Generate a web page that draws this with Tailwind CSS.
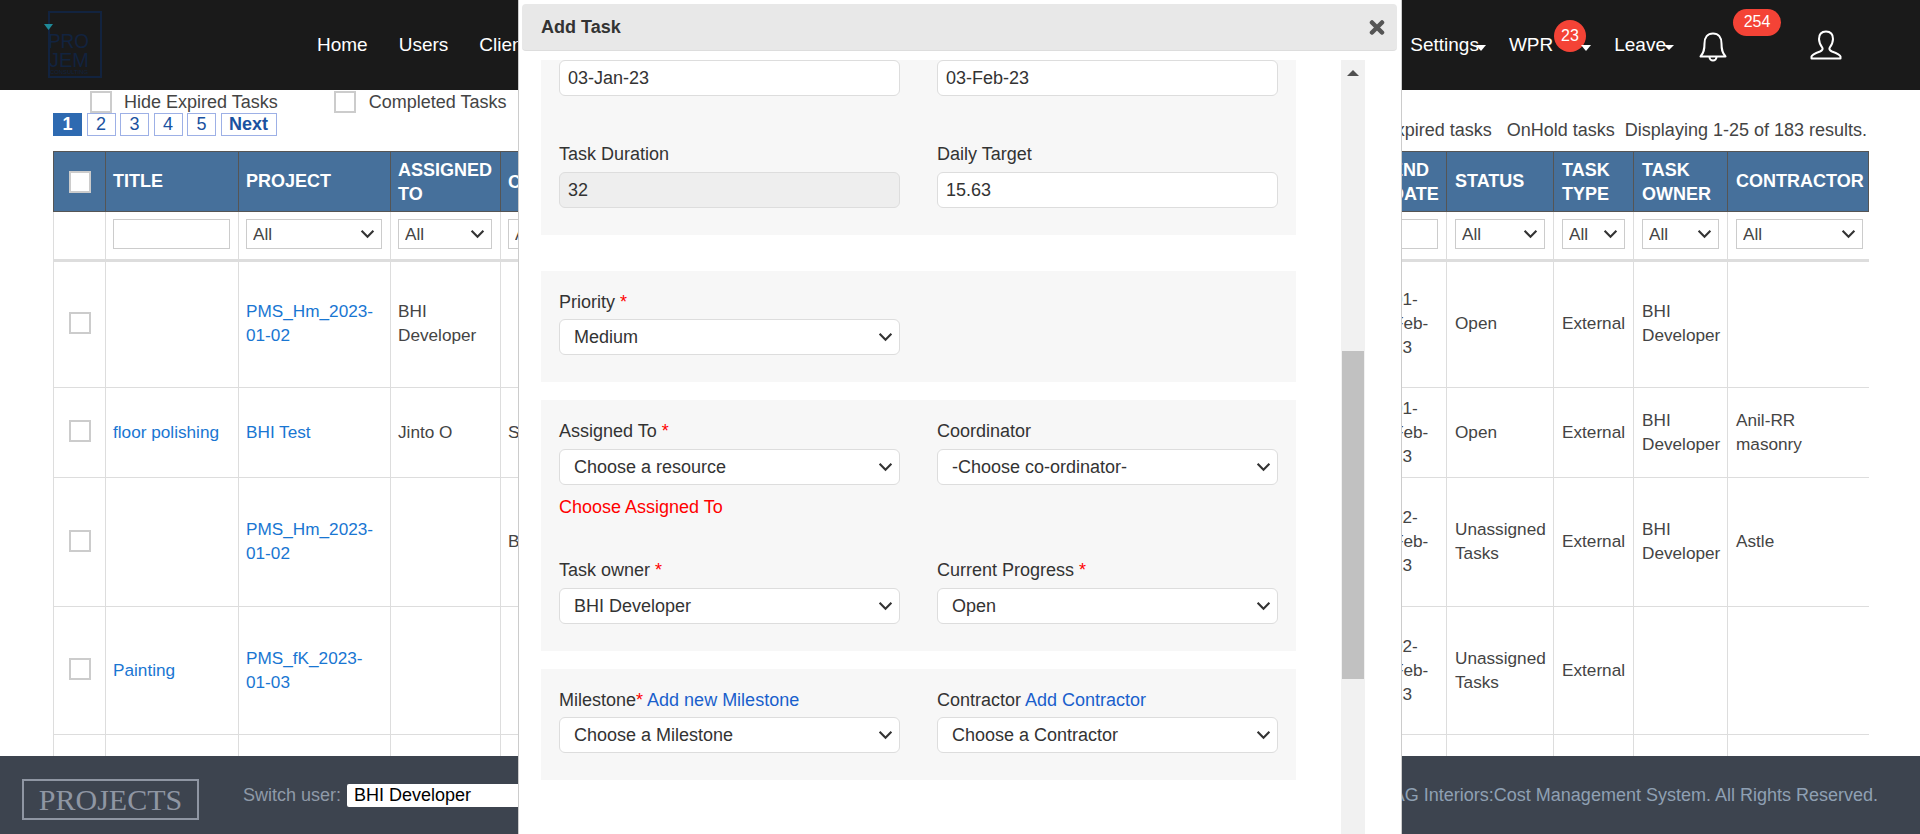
<!DOCTYPE html>
<html lang="en">
<head>
    <meta charset="UTF-8">
    <meta name="viewport" content="width=device-width, initial-scale=1.0">
    <title>Tasks</title>
    <script src="https://cdn.jsdelivr.net/npm/@tailwindcss/browser@4"></script>
</head>
<body class="relative h-[834px] overflow-hidden bg-white font-['Liberation_Sans',Arial,sans-serif] text-[18px] leading-6 text-[#444] [&_select]:appearance-none [&_select]:bg-no-repeat [&_select]:bg-position-[right_6px_center] [&_select]:bg-size-[15px_10px] [&_select]:bg-[url('data:image/svg+xml,%3Csvg%20xmlns=%22http://www.w3.org/2000/svg%22%20viewBox=%220%200%2014%209%22%3E%3Cpath%20d=%22M1.5%201.5l5.5%205.5%205.5-5.5%22%20fill=%22none%22%20stroke=%22%23333%22%20stroke-width=%222%22/%3E%3C/svg%3E')]">
    <div class="flex h-full flex-col">
        <!-- top nav -->
        <header class="flex h-[90px] shrink-0 items-center bg-[#1a1a1a] pb-[1px] text-[19px] text-white">
            <svg class="ml-[43px] h-[80px] w-[60px] shrink-0 self-start" viewBox="0 0 60 80">
                <rect x="6" y="12" width="52" height="65" fill="none" stroke="#12233f" stroke-width="2"/>
                <polygon points="1,24 10,24 5.500,30" fill="#1f8a99"/>
                <text x="5" y="48" font-size="20" fill="#12233f" textLength="41" lengthAdjust="spacingAndGlyphs">PRO</text>
                <text x="6" y="67" font-size="20" fill="#12233f" textLength="40" lengthAdjust="spacingAndGlyphs">JEM</text>
                <text x="7" y="74" font-size="5" fill="#12233f" textLength="38" lengthAdjust="spacingAndGlyphs">CONSULTING</text>
            </svg>
            <nav class="ml-[214px] flex gap-[31px]">
                <a>Home</a>
                <a>Users</a>
                <a>Clients</a>
            </nav>
            <div class="ml-auto flex items-center pr-[78px]">
                <a>Settings</a>
                <span class="ml-[-3px] mt-[6px] h-0 w-0 border-x-[5.5px] border-t-[6px] border-x-transparent border-t-white"></span>
                <a class="relative ml-[23px]">WPR
                    <span class="absolute left-[45px] top-[-13px] flex h-8 w-8 items-center justify-center rounded-full bg-[#f44336] text-[16px]">23</span>
                </a>
                <span class="relative ml-[28px] mt-[6px] h-0 w-0 border-x-[5.5px] border-t-[6px] border-x-transparent border-t-white"></span>
                <a class="ml-[23px]">Leave</a>
                <span class="ml-[-2px] mt-[6px] h-0 w-0 border-x-[5px] border-t-[5px] border-x-transparent border-t-white"></span>
                <div class="relative ml-[25px] mt-[4px]">
                    <svg class="block h-[30px] w-[28px]" viewBox="0 0 28 30" fill="none" stroke="#fff" stroke-width="2" stroke-linejoin="round" stroke-linecap="round">
                        <path d="M14 1.500c-5.500 0-8.500 4-8.500 10 0 6-.5 9-4 13h25c-3.500-4-4-7-4-13 0-6-3-10-8.500-10z"/>
                        <path d="M10.500 25a3.500 3.500 0 0 0 7 0"/>
                    </svg>
                    <span class="absolute left-[34px] top-[-23px] flex h-[27px] w-[48px] items-center justify-center rounded-full bg-[#f44336] text-[16px]">254</span>
                </div>
                <svg class="ml-[83px] h-[30px] w-[32px]" viewBox="0 0 32 30" fill="none" stroke="#fff" stroke-width="2" stroke-linejoin="round">
                    <path d="M16 1.500c-5 0-7 3.500-7 7.500 0 4 2 7 3.500 9 .5 1.500-.5 2.500-2.500 3.500-4 1.500-8 3-8.500 5v2h29v-2c-.5-2-4.500-3.500-8.500-5-2-1-3-2-2.500-3.500 1.500-2 3.500-5 3.500-9 0-4-2-7.500-7-7.500z"/>
                </svg>
            </div>
        </header>

        <main class="min-h-0 flex-1 overflow-hidden">
            <!-- filters and pagination -->
            <div class="flex h-[61px] justify-between pl-[53px] pr-[53px]">
                <div>
                    <div class="flex h-[22px] items-center pl-[37px] pt-[2px]">
                        <input type="checkbox" class="h-[22px] w-[22px] appearance-none border-2 border-[#ccc] bg-white">
                        <span class="ml-[12px]">Hide Expired Tasks</span>
                        <input type="checkbox" class="ml-[56px] h-[22px] w-[22px] appearance-none border-2 border-[#ccc] bg-white">
                        <span class="ml-[13px]">Completed Tasks</span>
                    </div>
                    <div class="mt-[1px] flex gap-[4.5px] text-[18px] leading-[21px] text-[#1a52a0]">
                        <a class="h-[23px] w-[29px] border border-[#2e6ab1] bg-[#2e6ab1] text-center font-bold text-white">1</a>
                        <a class="h-[23px] w-[29px] border border-[#9db0e6] text-center">2</a>
                        <a class="h-[23px] w-[29px] border border-[#9db0e6] text-center">3</a>
                        <a class="h-[23px] w-[29px] border border-[#9db0e6] text-center">4</a>
                        <a class="h-[23px] w-[29px] border border-[#9db0e6] text-center">5</a>
                        <a class="h-[23px] w-[56px] border border-[#9db0e6] text-center font-bold">Next</a>
                    </div>
                </div>
                <div class="flex gap-[15px] self-end pb-[9px]">
                    <span>Expired tasks</span>
                    <span>OnHold tasks</span>
                    <span class="ml-[-5px]">Displaying 1-25 of 183 results.</span>
                </div>
            </div>

            <!-- task grid -->
            <table class="ml-[53px] w-[1815px] table-fixed border-collapse text-[17.2px] [&_td]:border [&_td]:border-[#ddd] [&_td]:px-2 [&_td:last-child]:border-r-0 [&_td:nth-child(-n+5)]:pl-[7px] [&_th]:border [&_th]:border-[#555] [&_th]:px-2 [&_th]:text-left [&_th]:font-bold [&_th:nth-child(-n+5)]:pl-[7px] [&_tbody_td]:pb-[3px]">
                <colgroup>
                    <col class="w-[52px]"><col class="w-[133px]"><col class="w-[152px]"><col class="w-[110px]"><col class="w-[886px]"><col class="w-[60px]"><col class="w-[107px]"><col class="w-[80px]"><col class="w-[94px]"><col class="w-[141px]">
                </colgroup>
                <thead>
                    <tr class="h-[60px] bg-[#46709b] text-[18px] text-white">
                        <th><input type="checkbox" class="ml-[8px] block h-[22px] w-[22px] appearance-none border-2 border-[#ccc] bg-white"></th>
                        <th class="!pb-[2px]">TITLE</th>
                        <th class="!pb-[2px]">PROJECT</th>
                        <th>ASSIGNED TO</th>
                        <th>COORDINATOR</th>
                        <th class="!pl-[4px]">END DATE</th>
                        <th class="!pb-[2px]">STATUS</th>
                        <th>TASK TYPE</th>
                        <th>TASK OWNER</th>
                        <th class="!pb-[2px] !pr-0">CONTRACTOR</th>
                    </tr>
                    <tr class="h-[49px] border-b-[3px] border-[#ddd] [&_td]:pt-[7px] [&_td]:align-top">
                        <td></td>
                        <td><input type="text" class="block h-[30px] w-full border border-[#ccc]"></td>
                        <td><select class="block h-[30px] w-full border border-[#ccc] pl-[6px]"><option>All</option></select></td>
                        <td><select class="block h-[30px] w-full border border-[#ccc] pl-[6px]"><option>All</option></select></td>
                        <td><select class="block h-[30px] w-[200px] border border-[#ccc] pl-[6px]"><option>All</option></select></td>
                        <td><input type="text" class="block h-[30px] w-full border border-[#ccc]"></td>
                        <td><select class="block h-[30px] w-full border border-[#ccc] pl-[6px]"><option>All</option></select></td>
                        <td><select class="block h-[30px] w-full border border-[#ccc] pl-[6px]"><option>All</option></select></td>
                        <td><select class="block h-[30px] w-full border border-[#ccc] pl-[6px]"><option>All</option></select></td>
                        <td class="!pr-[6px]"><select class="block h-[30px] w-full border border-[#ccc] pl-[6px]"><option>All</option></select></td>
                    </tr>
                </thead>
                <tbody>
                    <tr class="h-[127px]">
                        <td><input type="checkbox" class="ml-[8px] block h-[22px] w-[22px] appearance-none border-2 border-[#ccc]"></td>
                        <td></td>
                        <td><a class="text-[#1976d2]">PMS_Hm_2023-01-02</a></td>
                        <td>BHI Developer</td>
                        <td></td>
                        <td class="!pl-[6px]">01-Feb-23</td>
                        <td>Open</td>
                        <td>External</td>
                        <td>BHI Developer</td>
                        <td></td>
                    </tr>
                    <tr class="h-[90px] [&_td]:!pb-[1px]">
                        <td><input type="checkbox" class="mb-[2px] ml-[8px] block h-[22px] w-[22px] appearance-none border-2 border-[#ccc]"></td>
                        <td><a class="text-[#1976d2]">floor polishing</a></td>
                        <td><a class="text-[#1976d2]">BHI Test</a></td>
                        <td>Jinto O</td>
                        <td>S</td>
                        <td class="!pl-[6px]">01-Feb-23</td>
                        <td>Open</td>
                        <td>External</td>
                        <td>BHI Developer</td>
                        <td>Anil-RR masonry</td>
                    </tr>
                    <tr class="h-[129px]">
                        <td><input type="checkbox" class="ml-[8px] block h-[22px] w-[22px] appearance-none border-2 border-[#ccc]"></td>
                        <td></td>
                        <td><a class="text-[#1976d2]">PMS_Hm_2023-01-02</a></td>
                        <td></td>
                        <td>B</td>
                        <td class="!pl-[6px]">02-Feb-23</td>
                        <td>Unassigned Tasks</td>
                        <td>External</td>
                        <td>BHI Developer</td>
                        <td>Astle</td>
                    </tr>
                    <tr class="h-[128px] [&_td]:!pb-[1px]">
                        <td><input type="checkbox" class="mb-[2px] ml-[8px] block h-[22px] w-[22px] appearance-none border-2 border-[#ccc]"></td>
                        <td><a class="text-[#1976d2]">Painting</a></td>
                        <td><a class="text-[#1976d2]">PMS_fK_2023-01-03</a></td>
                        <td></td>
                        <td></td>
                        <td class="!pl-[6px]">02-Feb-23</td>
                        <td>Unassigned Tasks</td>
                        <td>External</td>
                        <td></td>
                        <td></td>
                    </tr>
                    <tr class="h-[90px]">
                        <td></td><td></td><td></td><td></td><td></td><td></td><td></td><td></td><td></td><td></td>
                    </tr>
                </tbody>
            </table>
        </main>

        <!-- footer -->
        <footer class="flex h-[78px] shrink-0 items-start bg-[#3d444f] pl-[22px] pr-[42px] pt-[23px]">
            <div class="flex h-[41px] w-[177px] items-center justify-center border-2 border-[#8f96a3] pt-[1px] font-['Liberation_Serif',serif] text-[30px] text-[#8f96a3]">PROJECTS</div>
            <span class="ml-[44px] mt-[4px] text-[#8f9aa8]">Switch user:</span>
            <select class="ml-[6px] mt-[5px] h-[23px] w-[192px] rounded-[2px] bg-white pl-[7px] text-[18px] leading-[23px] text-black"><option>BHI Developer</option></select>
            <span class="ml-auto mt-[4px] text-[#8fa0b3]">AG Interiors:Cost Management System. All Rights Reserved.</span>
        </footer>
    </div>

    <!-- add task dialog -->
    <div class="absolute bottom-0 left-[518px] top-0 flex w-[884px] flex-col border-x border-[#ccc] bg-white text-[#333]">
        <div class="ml-[3px] mr-[4px] mt-[4px] flex h-[47px] shrink-0 items-center justify-between rounded-[4px] border-b border-[#ddd] bg-[#e8e8e8] pl-[19px] pr-[12px]">
            <span class="font-bold">Add Task</span>
            <svg class="h-[15px] w-[16px]" viewBox="0 0 16 15" stroke="#555" stroke-width="4.500" stroke-linecap="round"><path d="M3 2.500l10 10M13 2.500l-10 10"/></svg>
        </div>
        <div class="mt-[9px] flex min-h-0 flex-1 pl-[22px]">
            <div class="w-[755px] shrink-0">
                <section class="h-[175px] bg-[#f7f7f7] px-[18px]">
                    <div class="grid grid-cols-2 gap-x-[37px]">
                        <input type="text" value="03-Jan-23" class="h-[36px] rounded-[6px] border border-[#ddd] bg-white px-2">
                        <input type="text" value="03-Feb-23" class="h-[36px] rounded-[6px] border border-[#ddd] bg-white px-2">
                        <div class="mt-[46px]">
                            <label class="mb-[6px] block">Task Duration</label>
                            <input type="text" value="32" disabled class="h-[36px] w-full rounded-[6px] border border-[#ddd] bg-[#eee] px-2">
                        </div>
                        <div class="mt-[46px]">
                            <label class="mb-[6px] block">Daily Target</label>
                            <input type="text" value="15.63" class="h-[36px] w-full rounded-[6px] border border-[#ddd] bg-white px-2">
                        </div>
                    </div>
                </section>
                <section class="mt-[36px] h-[111px] bg-[#f7f7f7] px-[18px] pt-[19px]">
                    <div class="grid grid-cols-2 gap-x-[37px]">
                        <div>
                            <label class="mb-[5px] block">Priority <span class="text-[#f00]">*</span></label>
                            <select class="h-[36px] w-full rounded-[6px] border border-[#ddd] bg-white pl-[14px]"><option>Medium</option></select>
                        </div>
                    </div>
                </section>
                <section class="mt-[18px] h-[251px] bg-[#f7f7f7] px-[18px] pt-[19px]">
                    <div class="grid grid-cols-2 gap-x-[37px]">
                        <div>
                            <label class="mb-[6px] block">Assigned To <span class="text-[#f00]">*</span></label>
                            <select class="h-[36px] w-full rounded-[6px] border border-[#ddd] bg-white pl-[14px]"><option>Choose a resource</option></select>
                            <p class="mt-[10px] text-[#f00]">Choose Assigned To</p>
                        </div>
                        <div>
                            <label class="mb-[6px] block">Coordinator</label>
                            <select class="h-[36px] w-full rounded-[6px] border border-[#ddd] bg-white pl-[14px]"><option>-Choose co-ordinator-</option></select>
                        </div>
                        <div class="mt-[39px]">
                            <label class="mb-[6px] block">Task owner <span class="text-[#f00]">*</span></label>
                            <select class="h-[36px] w-full rounded-[6px] border border-[#ddd] bg-white pl-[14px]"><option>BHI Developer</option></select>
                        </div>
                        <div class="mt-[39px]">
                            <label class="mb-[6px] block">Current Progress <span class="text-[#f00]">*</span></label>
                            <select class="h-[36px] w-full rounded-[6px] border border-[#ddd] bg-white pl-[14px]"><option>Open</option></select>
                        </div>
                    </div>
                </section>
                <section class="mt-[18px] h-[111px] bg-[#f7f7f7] px-[18px] pt-[19px]">
                    <div class="grid grid-cols-2 gap-x-[37px]">
                        <div>
                            <label class="mb-[5px] block">Milestone<span class="text-[#f00]">*</span> <a class="text-[#1a5fcc]">Add new Milestone</a></label>
                            <select class="h-[36px] w-full rounded-[6px] border border-[#ddd] bg-white pl-[14px]"><option>Choose a Milestone</option></select>
                        </div>
                        <div>
                            <label class="mb-[5px] block">Contractor <a class="text-[#1a5fcc]">Add Contractor</a></label>
                            <select class="h-[36px] w-full rounded-[6px] border border-[#ddd] bg-white pl-[14px]"><option>Choose a Contractor</option></select>
                        </div>
                    </div>
                </section>
            </div>
            <!-- scrollbar -->
            <div class="ml-[45px] flex w-[24px] shrink-0 flex-col bg-[#f1f1f1]">
                <div class="flex h-[26px] items-center justify-center">
                    <span class="h-0 w-0 border-x-[6px] border-b-[6px] border-x-transparent border-b-[#505050]"></span>
                </div>
                <div class="mx-auto mt-[265px] h-[328px] w-[22px] bg-[#c1c1c1]"></div>
            </div>
        </div>
    </div>
</body>
</html>
